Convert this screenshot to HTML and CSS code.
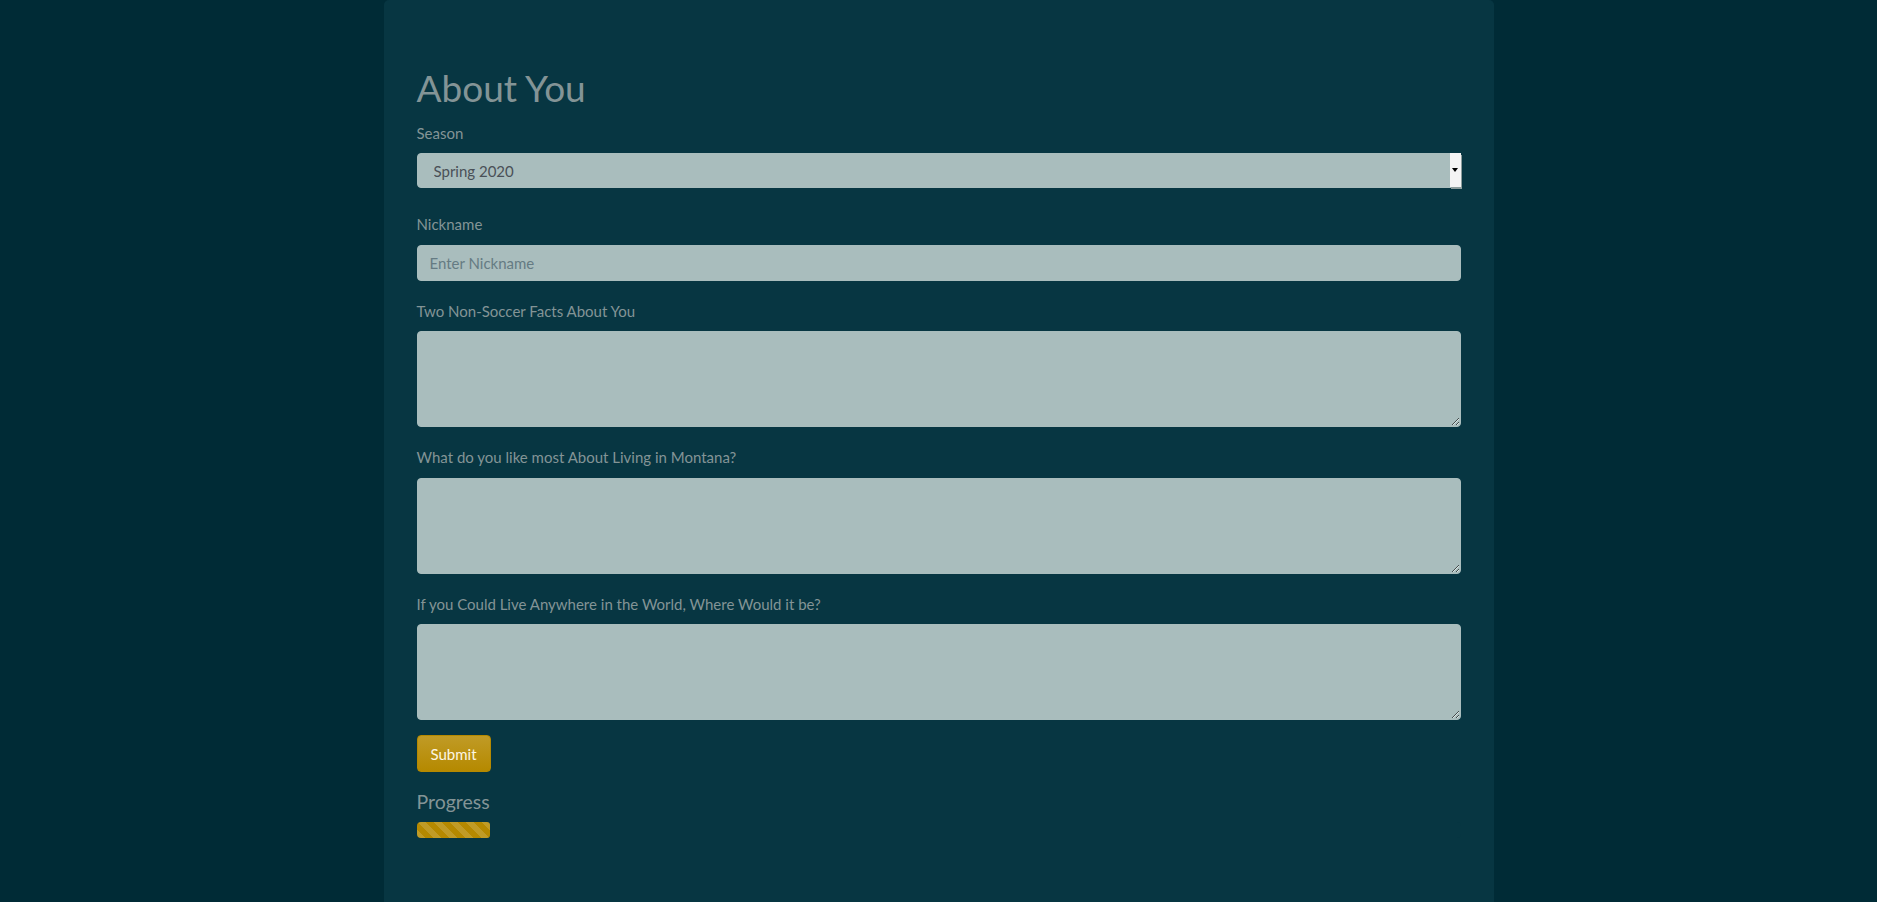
FILE: index.html
```html
<!DOCTYPE html>
<html lang="en">
<head>
<meta charset="utf-8">
<title>About You</title>
<link rel="stylesheet" href="styles.css">
</head>
<body>
<div class="page">
  <main class="panel">
    <h1 class="title">About You</h1>
    <form class="form">
      <div class="group group-first">
        <label class="label" for="season">Season</label>
        <div class="select-wrap">
          <select class="control select" id="season">
            <option>Spring 2020</option>
          </select>
          <span class="select-btn" aria-hidden="true"><span class="select-caret"></span></span>
        </div>
      </div>
      <div class="group">
        <label class="label" for="nick">Nickname</label>
        <input class="control input" id="nick" type="text" placeholder="Enter Nickname">
      </div>
      <div class="group">
        <label class="label" for="facts">Two Non-Soccer Facts About You</label>
        <textarea class="control area" id="facts"></textarea>
      </div>
      <div class="group">
        <label class="label" for="montana">What do you like most About Living in Montana?</label>
        <textarea class="control area" id="montana"></textarea>
      </div>
      <div class="group group-last">
        <label class="label" for="world">If you Could Live Anywhere in the World, Where Would it be?</label>
        <textarea class="control area" id="world"></textarea>
      </div>
      <button class="btn" type="button">Submit</button>
    </form>
    <h5 class="progress-title">Progress</h5>
    <div class="progress"><div class="progress-bar" style="width:73px"></div></div>
  </main>
</div>
</body>
</html>
```
FILE: styles.css
```css
* { box-sizing: border-box; }
html, body { margin: 0; padding: 0; }
body {
  background: #002b36;
  color: #839496;
  font-family: Lato, "Open Sans", sans-serif;
  font-size: 15px;
  line-height: 1.5;
}
.page { min-height: 100vh; }
.panel {
  width: 1110px;
  margin: 0 auto;
  min-height: 902px;
  background: #073642;
  border-radius: 5px 5px 0 0;
  padding: 66px 33px 40px;
}
.title {
  margin: 0 0 11.5px;
  font-size: 37px;
  font-weight: 400;
  line-height: 1.2;
  color: #839496;
}
.form { display: flex; flex-direction: column; align-items: flex-start; }
.group { width: 100%; display: flex; flex-direction: column; margin-bottom: 19px; }
.group-first { margin-bottom: 25px; }
.group-last { margin-bottom: 15px; }
.label {
  display: block;
  margin-bottom: 9px;
  line-height: 22.5px;
  color: #839496;
}
.control {
  width: 100%;
  font-family: inherit;
  font-size: 15px;
  background-color: #a9bdbd;
  color: #495057;
  border: 1px solid #a9bdbd;
  border-radius: 4px;
  padding: 6px 12px;
  line-height: 1.5;
}
.control::placeholder { color: #657b83; }
.select-wrap { position: relative; width: 100%; }
.select {
  display: block;
  height: 35px;
  appearance: none;
  -webkit-appearance: none;
  padding: 5px 20px 5px 16px;
}
.select-btn {
  position: absolute;
  top: 0;
  right: 0;
  width: 11px;
  height: 34px;
  background: #f4f4f4;
  box-shadow: 1px 2px 0 #8c9c9c;
  display: flex;
  align-items: center;
  justify-content: center;
  pointer-events: none;
}
.select-caret {
  width: 0;
  height: 0;
  border-left: 3px solid transparent;
  border-right: 3px solid transparent;
  border-top: 4px solid #000;
}
.input { height: 36px; }
.area { height: 96px; resize: vertical; }
.btn {
  font-family: inherit;
  font-size: 15px;
  line-height: 1.5;
  color: #fdf6e3;
  background: linear-gradient(180deg, #c09b26, #b58900);
  border: 1px solid #b58900;
  border-radius: 4px;
  padding: 6px 13px;
  height: 37px;
}
.progress-title {
  margin: 18px 0 8px;
  font-size: 19.5px;
  font-weight: 400;
  line-height: 1.2;
  color: #839496;
}
.progress {
  display: flex;
  height: 16px;
  background: #073642;
  border-radius: 4px;
  overflow: hidden;
}
.progress-bar {
  height: 100%;
  border-radius: 0 3px 3px 0;
  background-color: #b58900;
  background-image: linear-gradient(45deg, rgba(255,255,255,.15) 25%, transparent 25%, transparent 50%, rgba(255,255,255,.15) 50%, rgba(255,255,255,.15) 75%, transparent 75%, transparent);
  background-size: 16px 16px;
}
```
